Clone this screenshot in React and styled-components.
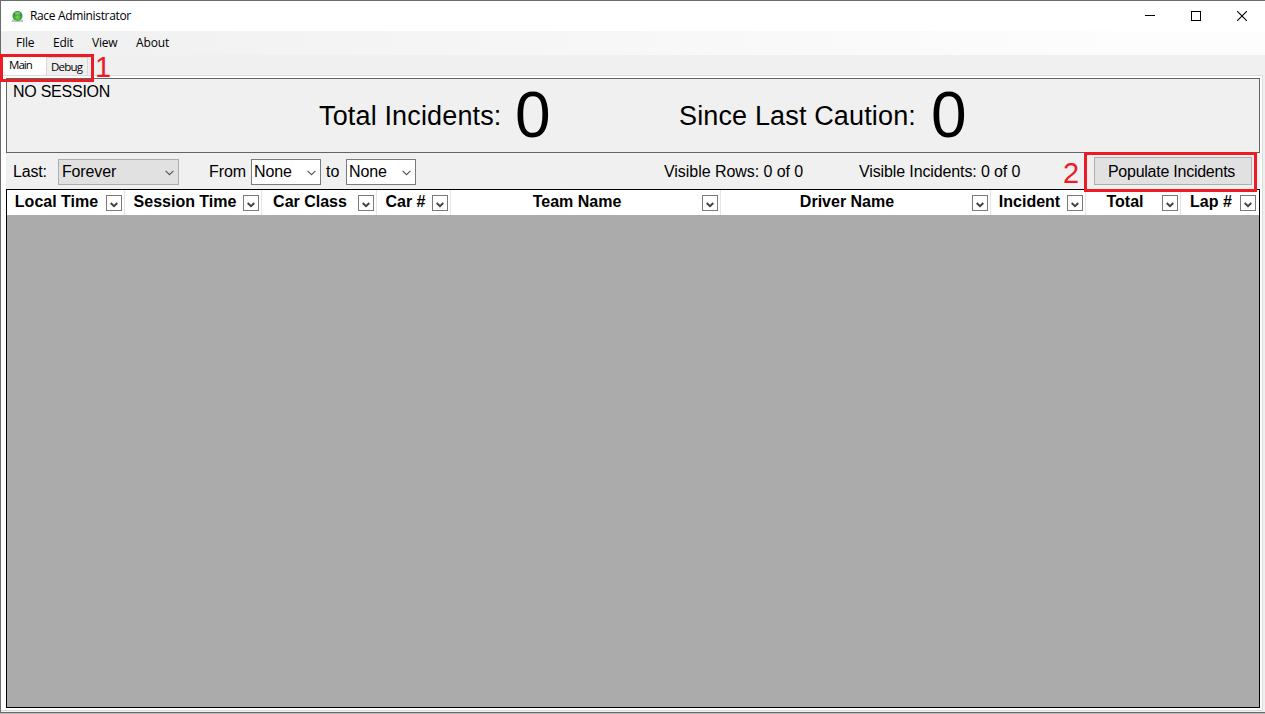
import React from "react";
import styled, { createGlobalStyle } from "styled-components";

const GlobalStyle = createGlobalStyle`
  * { box-sizing: border-box; }
  body { margin: 0; background: #fff; overflow: hidden; }
`;

const Window = styled.div`
  position: relative;
  width: 1265px;
  height: 714px;
  display: flex;
  flex-direction: column;
  background: #f0f0f0;
  border: solid #6b6b6b;
  border-width: 1px 0 0 1px;
  font-family: "Liberation Sans", Arial, sans-serif;
  color: #000;
`;

const TitleBar = styled.header`
  height: 30px;
  flex: none;
  display: flex;
  align-items: center;
  background: #fff;
  padding-left: 10px;
`;

const UiText = styled.span`
  font: ${(p) => p.$size || 12}px/16px "Open Sans", "Noto Sans", sans-serif;
  letter-spacing: ${(p) => p.$spacing || 0}px;
  white-space: nowrap;
`;

const Title = styled(UiText)`
  margin-left: 6px;
  flex: 1;
`;

const Caption = styled.div`
  width: 46px;
  height: 30px;
  display: flex;
  align-items: center;
  justify-content: center;
  svg { display: block; }
`;

const MenuBar = styled.nav`
  height: 24px;
  flex: none;
  display: flex;
  align-items: center;
  padding-left: 15px;
  background: linear-gradient(90deg, #f0f0f0, #fdfdfd 90%);
`;

const MenuItem = styled(UiText)`
  width: ${(p) => p.$width}px;
`;

const TabStrip = styled.div`
  height: 20px;
  flex: none;
  display: flex;
  align-items: flex-end;
  padding-left: 2px;
`;

const Tab = styled.div`
  width: ${(p) => p.$width}px;
  height: ${(p) => (p.$active ? 20 : 18)}px;
  padding: ${(p) => (p.$active ? "1px 0 0 5px" : "1px 0 0 4px")};
  background: ${(p) => (p.$active ? "#fff" : "#f0f0f0")};
  border: 1px solid ${(p) => (p.$active ? "#fff" : "#d9d9d9")};
  border-bottom: 0;
  display: flex;
`;

const TabPage = styled.main`
  width: 1262px;
  height: 636px;
  flex: none;
  border: 1px solid #dcdcdc;
  border-left: 0;
  background: #fff;
  padding: 2px 2px 3px 5px;
  display: flex;
  flex-direction: column;
`;

const Summary = styled.section`
  height: 75px;
  width: 1254px;
  flex: none;
  border: 1px solid #646464;
  background: #f0f0f0;
  display: flex;
  align-items: flex-start;
`;

const Label = styled.span`
  font-size: 16px;
  line-height: 18px;
  letter-spacing: ${(p) => p.$spacing || 0}px;
  white-space: nowrap;
  width: ${(p) => p.$width}px;
  flex: none;
`;

const SessionLabel = styled(Label)`
  margin: 4px 0 0 6px;
`;

const ToolbarLabel = styled(Label)`
  margin-top: 2px;
`;

const CounterLabel = styled.span`
  width: ${(p) => p.$width}px;
  flex: none;
  font-size: 27px;
  line-height: 30px;
  margin-top: 22px;
  letter-spacing: ${(p) => p.$spacing || 0}px;
  white-space: nowrap;
`;

const CounterValue = styled.span`
  width: ${(p) => p.$width}px;
  flex: none;
  font-size: 64px;
  line-height: 72px;
`;

const Toolbar = styled.section`
  height: 36px;
  flex: none;
  width: 1254px;
  background: #f0f0f0;
  display: flex;
  align-items: center;
  padding: 0 0 0 7px;
`;

const Combo = styled.div`
  width: ${(p) => p.$width}px;
  height: 26px;
  margin: 2px ${(p) => p.$gap}px 0 0;
  flex: none;
  display: flex;
  align-items: center;
  justify-content: space-between;
  padding: 0 4px 0 ${(p) => (p.$flat ? 3 : 2)}px;
  border: 1px solid ${(p) => (p.$flat ? "#adadad" : "#7a7a7a")};
  background: ${(p) => (p.$flat ? "#e1e1e1" : "#fff")};
  font-size: 16px;
  line-height: 18px;
  letter-spacing: -0.15px;
  svg { display: block; margin-top: 2px; }
`;

const PushButton = styled.button`
  width: 158px;
  height: 28px;
  padding: 2px 3px 0 0;
  border: 1px solid #adadad;
  background: #e1e1e1;
  font: 16px/18px "Liberation Sans", Arial, sans-serif;
  letter-spacing: -0.25px;
  color: #000;
  white-space: nowrap;
`;

const Grid = styled.section`
  height: 519px;
  width: 1254px;
  flex: none;
  border: 1px solid #000;
  background: #ababab;
`;

const GridHeader = styled.div`
  height: 25px;
  display: flex;
  background: #fff;
`;

const HeaderCell = styled.div`
  width: ${(p) => p.$width}px;
  flex: none;
  display: flex;
  border-right: 1px solid ${(p) => (p.$last ? "#fff" : "#e5e5e5")};
  padding-right: 2px;
  font-size: 16px;
  line-height: 18px;
  font-weight: bold;
  text-align: center;
  white-space: nowrap;
`;

const HeaderText = styled.span`
  flex: 1;
  padding: 3px 0 0 ${(p) => p.$shift}px;
`;

const FilterButton = styled.div`
  width: 16px;
  height: 16px;
  flex: none;
  margin-top: 5px;
  border: 1px solid #7a7a7a;
  display: flex;
  align-items: center;
  justify-content: center;
  svg { display: block; margin-top: 3px; }
`;

const Callout = styled.div`
  position: absolute;
  left: ${(p) => p.$x}px;
  top: ${(p) => p.$y}px;
  width: ${(p) => p.$w}px;
  height: ${(p) => p.$h}px;
  border: 3px solid #ed1c24;
`;

const CalloutNumber = styled.span`
  position: absolute;
  left: ${(p) => p.$x}px;
  top: ${(p) => p.$y}px;
  font-size: 29px;
  line-height: 32px;
  color: #ed1c24;
`;

const WindowEdge = styled.footer`
  height: 2px;
  flex: none;
  margin-left: -1px;
  background: #b4b4b4;
  border-top: 1px solid #6b6b6b;
`;

const BottomGap = styled.div`
  height: 1px;
  flex: none;
`;

function AppIcon() {
  return (
    <svg width="13" height="13" viewBox="0 0 13 13">
      <defs>
        <radialGradient id="orb" cx="50%" cy="65%" r="65%">
          <stop offset="0" stopColor="#6fdc50" />
          <stop offset=".5" stopColor="#43a837" />
          <stop offset="1" stopColor="#2f7a33" />
        </radialGradient>
      </defs>
      <path d="M1.4 9.5h10.2l1 2.6H.4z" fill="#c4c4c4" />
      <circle cx="6.5" cy="6" r="5" fill="url(#orb)" />
      <ellipse cx="6.5" cy="3.2" rx="2.8" ry="1.4" fill="#b5dcb0" opacity=".55" />
    </svg>
  );
}

function ComboArrow() {
  return (
    <svg width="9" height="6" viewBox="0 0 9 6">
      <path d="M.6 .8 4.5 4.7 8.4 .8" fill="none" stroke="#555" strokeWidth="1.1" />
    </svg>
  );
}

const COLUMNS = [
  { name: "Local Time", width: 118, shift: 0 },
  { name: "Session Time", width: 137, shift: 2 },
  { name: "Car Class", width: 115, shift: 0 },
  { name: "Car #", width: 74, shift: 2 },
  { name: "Team Name", width: 270, shift: 1 },
  { name: "Driver Name", width: 270, shift: 1 },
  { name: "Incident", width: 95, shift: 1 },
  { name: "Total", width: 95, shift: 2 },
  { name: "Lap #", width: 78, shift: 1 },
];

export default function App() {
  return (
    <>
      <GlobalStyle />
      <Window>
        <TitleBar>
          <AppIcon />
          <Title $spacing={-0.35}>Race Administrator</Title>
          <Caption>
            <svg width="10" height="10" shapeRendering="crispEdges">
              <path d="M0 4h10v1H0z" />
            </svg>
          </Caption>
          <Caption>
            <svg width="10" height="10" shapeRendering="crispEdges">
              <path d="M.5 .5h9v9h-9z" fill="none" stroke="#000" />
            </svg>
          </Caption>
          <Caption>
            <svg width="10" height="10">
              <path d="M0 0 10 10M10 0 0 10" stroke="#000" strokeWidth="1.1" />
            </svg>
          </Caption>
        </TitleBar>
        <MenuBar>
          <MenuItem $width={37} $spacing={-0.25}>FIle</MenuItem>
          <MenuItem $width={39} $spacing={-0.25}>Edit</MenuItem>
          <MenuItem $width={44} $spacing={-0.25}>View</MenuItem>
          <MenuItem $width={50} $spacing={-0.1}>About</MenuItem>
        </MenuBar>
        <TabStrip>
          <Tab $width={43} $active>
            <UiText $size={11.5} $spacing={-0.95}>Main</UiText>
          </Tab>
          <Tab $width={42}>
            <UiText $size={11.5} $spacing={-0.8}>Debug</UiText>
          </Tab>
        </TabStrip>
        <TabPage>
          <Summary>
            <SessionLabel $width={306} $spacing={-0.25}>NO SESSION</SessionLabel>
            <CounterLabel $width={196} $spacing={0.15}>Total Incidents:</CounterLabel>
            <CounterValue $width={164}>0</CounterValue>
            <CounterLabel $width={252} $spacing={0.15}>Since Last Caution:</CounterLabel>
            <CounterValue $width={40}>0</CounterValue>
          </Summary>
          <Toolbar>
            <ToolbarLabel $width={45} $spacing={-0.2}>Last:</ToolbarLabel>
            <Combo $width={121} $gap={30} $flat>
              Forever
              <ComboArrow />
            </Combo>
            <ToolbarLabel $width={42} $spacing={-0.1}>From</ToolbarLabel>
            <Combo $width={70} $gap={5}>
              None
              <ComboArrow />
            </Combo>
            <ToolbarLabel $width={20}>to</ToolbarLabel>
            <Combo $width={70} $gap={248}>
              None
              <ComboArrow />
            </Combo>
            <ToolbarLabel $width={195} $spacing={-0.05}>Visible Rows: 0 of 0</ToolbarLabel>
            <ToolbarLabel $width={235} $spacing={-0.12}>Visible Incidents: 0 of 0</ToolbarLabel>
            <PushButton>Populate Incidents</PushButton>
          </Toolbar>
          <Grid>
            <GridHeader>
              {COLUMNS.map(({ name, width, shift }, i) => (
                <HeaderCell key={name} $width={width} $last={i === COLUMNS.length - 1}>
                  <HeaderText $shift={shift}>{name}</HeaderText>
                  <FilterButton>
                    <svg width="8" height="6" viewBox="0 0 8 6">
                      <path d="M.7 1 4 4.2 7.3 1" fill="none" stroke="#404040" strokeWidth="1.9" />
                    </svg>
                  </FilterButton>
                </HeaderCell>
              ))}
            </GridHeader>
          </Grid>
        </TabPage>
        <BottomGap />
        <WindowEdge />
        <Callout $x={-1} $y={53} $w={94} $h={28} />
        <CalloutNumber $x={94} $y={50}>1</CalloutNumber>
        <Callout $x={1083} $y={151} $w={173} $h={40} />
        <CalloutNumber $x={1062} $y={156}>2</CalloutNumber>
      </Window>
    </>
  );
}
